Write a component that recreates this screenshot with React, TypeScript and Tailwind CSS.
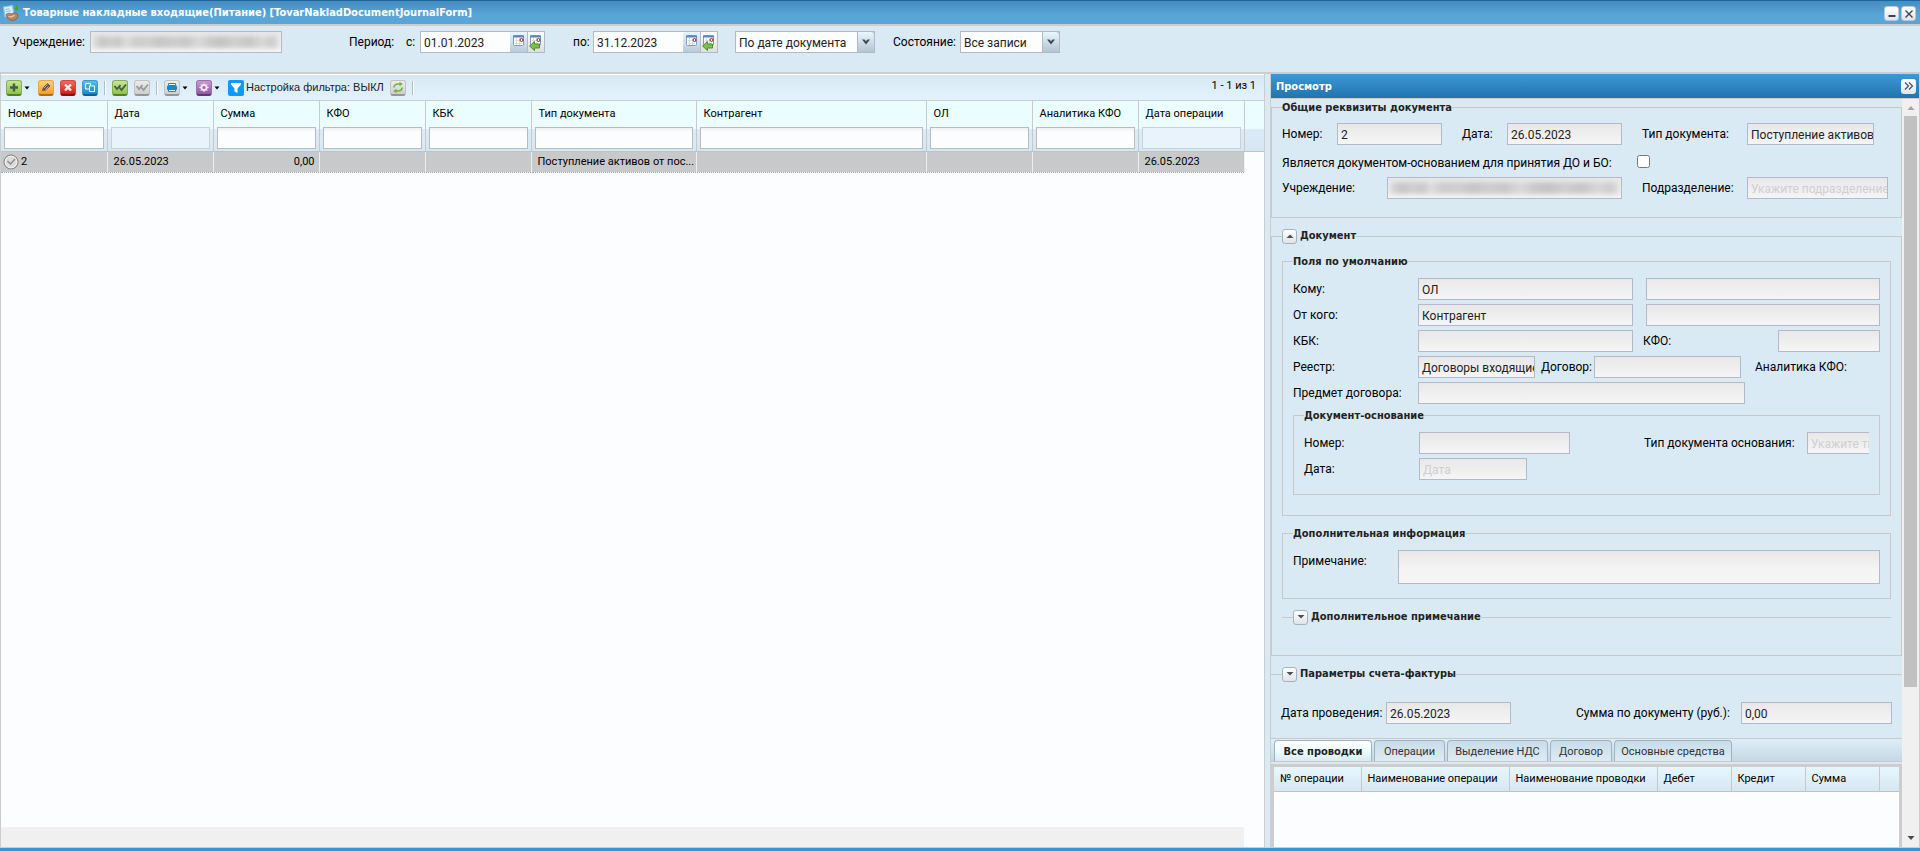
import React from 'react';
import clsx from 'clsx';

type FieldProps = {
  id: string;
  className: string;
  value?: string;
  placeholder?: string;
};

type FieldLabelProps = {
  htmlFor: string;
  className?: string;
  children: React.ReactNode;
};

type Column = {
  id: string;
  title: string;
  value: string;
  width: string;
  locked?: boolean;
  numeric?: boolean;
};

const columns: Column[] = [
  { id: 'number', title: 'Номер', value: '2', width: 'w-[106px]' },
  { id: 'date', title: 'Дата', value: '26.05.2023', width: 'w-[106px]', locked: true },
  { id: 'sum', title: 'Сумма', value: '0,00', width: 'w-[106px]', numeric: true },
  { id: 'kfo', title: 'КФО', value: '', width: 'w-[106px]' },
  { id: 'kbk', title: 'КБК', value: '', width: 'w-[106px]' },
  { id: 'type', title: 'Тип документа', value: 'Поступление активов от пос...', width: 'w-[165px]' },
  { id: 'agent', title: 'Контрагент', value: '', width: '' },
  { id: 'person', title: 'ОЛ', value: '', width: 'w-[106px]' },
  { id: 'analytics', title: 'Аналитика КФО', value: '', width: 'w-[106px]' },
  { id: 'opdate', title: 'Дата операции', value: '26.05.2023', width: 'w-[106px]', locked: true },
];

const entryColumns = [
  { title: '№ операции', width: 'w-[87px]' },
  { title: 'Наименование операции', width: 'w-[148px]' },
  { title: 'Наименование проводки', width: 'w-[148px]' },
  { title: 'Дебет', width: 'w-[74px]' },
  { title: 'Кредит', width: 'w-[74px]' },
  { title: 'Сумма', width: 'w-[74px]' },
];

const tabs = [
  { title: 'Все проводки', width: 'w-[98px]' },
  { title: 'Операции', width: 'w-[71px]' },
  { title: 'Выделение НДС', width: 'w-[101px]' },
  { title: 'Договор', width: 'w-[62px]' },
  { title: 'Основные средства', width: 'w-[118px]' },
];

function FieldLabel({ htmlFor, className, children }: FieldLabelProps) {
  return (
    <label htmlFor={htmlFor} className={clsx('shrink-0 whitespace-nowrap', className)}>
      {children}
    </label>
  );
}

function Field({ id, className, value, placeholder }: FieldProps) {
  return (
    <input
      id={id}
      type="text"
      readOnly
      value={value ?? ''}
      placeholder={placeholder}
      className={clsx(
        'h-[22px] shrink-0 border border-[#b5b8c8] bg-linear-to-b from-[#e8e8e8] to-[#f5f5f5] pt-0.5 pl-[3px] text-[#222] placeholder:text-[#cfcfd3]',
        className,
      )}
    />
  );
}

// Field whose content is hidden behind a smudge
function MaskedField({ id, className }: { id: string; className: string }) {
  return (
    <div className={clsx('relative shrink-0', className)}>
      <Field id={id} className="block w-full" />
      <span className="pointer-events-none absolute inset-x-[3px] inset-y-[5px] bg-[linear-gradient(90deg,#dcdcdc_0%,#c6c6c6_5%,#d0d0d0_10%,#c8c8c8_14%,#dedede_18%,#cccccc_23%,#d0d0d0_30%,#c6c6c6_36%,#cecece_44%,#c8c8c8_50%,#dadada_57%,#cacaca_63%,#c4c4c4_69%,#cfcfcf_76%,#c7c7c7_84%,#d8d8d8_91%,#cccccc_96%,#e0e0e0_100%)] blur-[2px]" />
    </div>
  );
}

function Calendar({ arrow }: { arrow?: boolean }) {
  return (
    <svg viewBox="0 0 16 18" className="h-[18px] w-4">
      <rect x="2.5" y="2.5" width="10" height="10" rx="1" fill="#fff" stroke="#7d9ac6" />
      <path d="M2 3.5h11" stroke="#5f83bb" strokeWidth="2" />
      <path d="M4 7.5h7M4 10.5h7M5.500 5v7M8.500 5v7" stroke="#d5dbe4" strokeWidth="1" />
      <circle cx="10.500" cy="7" r="1.500" fill="#fff" stroke="#a01818" />
      {arrow && <path d="M1.500 13l5-4.500v2.500h5v4h-5v2.500z" fill="#7cc04a" stroke="#3f8a22" strokeWidth="0.9" />}
    </svg>
  );
}

function DateField({ id, value }: { id: string; value: string }) {
  return (
    <div className="flex">
      <input
        id={id}
        type="text"
        defaultValue={value}
        className="h-[22px] w-[90px] border border-r-0 border-[#b5b8c8] bg-[#fcfdff] px-[3px] pt-0.5 text-[#222]"
      />
      <button
        aria-label="Выбрать дату"
        className="flex h-[22px] w-[17px] items-center justify-center border-y border-[#b5b8c8] bg-linear-to-b from-[#eaf5fb] to-[#b9cbd8]"
      >
        <Calendar />
      </button>
      <button
        aria-label="Сбросить дату"
        className="flex h-[22px] w-[18px] items-center justify-center border border-[#b5b8c8] bg-linear-to-b from-white to-[#dcdfe2]"
      >
        <Calendar arrow />
      </button>
    </div>
  );
}

function Combo({ id, className, value }: { id: string; className: string; value: string }) {
  return (
    <div className={clsx('relative', className)}>
      <select id={id} className="block h-[22px] w-full appearance-none border border-[#b5b8c8] bg-[#fcfdff] px-[3px] pt-0.5 text-[#222]">
        <option>{value}</option>
      </select>
      <span className="pointer-events-none absolute inset-y-0 right-0 flex w-[18px] items-center justify-center rounded-tr-sm border border-[#b5b8c8] bg-linear-to-b from-[#eaf7fd] to-[#b3c5d1]">
        <svg viewBox="0 0 10 6" className="mb-px h-1.5 w-2.5">
          <path d="M1 0.500h2.500L5 2.200L6.500 0.500H9L5 5.500z" fill="#3d4a53" />
        </svg>
      </span>
    </div>
  );
}

type ToolProps = {
  label: string;
  tone: string;
  menu?: boolean;
  children: React.ReactNode;
};

function Tool({ label, tone, menu, children }: ToolProps) {
  return (
    <button aria-label={label} className="flex items-center gap-[2px]">
      <span className={clsx('flex h-4 w-4 items-center justify-center rounded-[3px] border border-b-2 bg-linear-to-b', tone)}>
        <svg viewBox="0 0 14 13" className="h-[13px] w-3.5 shrink-0" fill="none">
          {children}
        </svg>
      </span>
      {menu && (
        <svg viewBox="0 0 6 4" className="h-1 w-1.5">
          <path d="M0.500 0.500h5L3 3.500z" fill="#000" />
        </svg>
      )}
    </button>
  );
}

function Separator() {
  return <span className="h-3.5 w-0.5 border-r border-r-white bg-[#b3bcc2]" />;
}

const doubleCheck = 'M1.500 5l2.500 3l3.500-4M6.500 6.500l2 2.500l4.500-5.500';

function Toolbar() {
  return (
    <div className="flex h-[26px] items-center border-t border-white bg-linear-to-b from-[#d8e8f2] to-[#e3f3fd] pr-2 pl-[5px]">
      <div className="flex items-center gap-2">
        <Tool label="Добавить" menu tone="border-[#8cab5a] border-b-[#5b7d26] from-[#c6e59a] to-[#8dc63f]">
          <path d="M7 2.500v8M3 6.500h8" stroke="#4b5a45" strokeWidth="2.400" />
        </Tool>
        <div className="flex items-center gap-1.5">
          <Tool label="Изменить" tone="border-[#e8a640] border-b-[#b56d0a] from-[#ffd07a] to-[#fb9d1e]">
            <path d="M3.500 9.500l1-3l4-4l2.500 2.500l-4.500 4z" fill="#555" stroke="#6a5a45" />
            <path d="M5 7l3.500-3.500M6.500 8.500l3-3" stroke="#c9c4b8" strokeWidth="0.800" />
          </Tool>
          <Tool label="Удалить" tone="border-[#d8433d] border-b-[#8e0c0a] from-[#f4665f] to-[#cf1512]">
            <path d="M4 3.500l6 6M10 3.500l-6 6" stroke="#f3eeee" strokeWidth="2.400" />
          </Tool>
          <Tool label="Копировать" tone="border-[#3b9bc8] border-b-[#0c6391] from-[#5fbce6] to-[#0f8dc7]">
            <path d="M2.500 2.500h5v5.500h-5z" stroke="#fff" />
            <path d="M6.500 5h5v5.500h-5z" fill="#2d9bd0" stroke="#fff" />
          </Tool>
        </div>
      </div>
      <div className="ml-1.5 flex items-center gap-1.5">
        <Separator />
        <Tool label="Провести" tone="border-[#8cab5a] border-b-[#5b7d26] from-[#c6e59a] to-[#8dc63f]">
          <path d={doubleCheck} stroke="#4a5a42" strokeWidth="1.800" />
        </Tool>
        <Tool label="Отменить проведение" tone="border-[#c2c2c2] border-b-[#969696] from-[#ececec] to-[#cfcfcf]">
          <path d={doubleCheck} stroke="#9a9a9a" strokeWidth="1.800" />
        </Tool>
        <Separator />
        <div className="flex items-center gap-2">
          <Tool label="Печать" menu tone="border-[#c2c2c2] border-b-[#969696] from-[#ececec] to-[#cfcfcf]">
            <path d="M3.500 2.500h7v2h-7zM3.500 8.500h7v2h-7z" fill="#fff" stroke="#1a86cc" />
            <rect x="2" y="4.500" width="10" height="4.500" rx="1" fill="#1a86cc" />
          </Tool>
          <Tool label="Действия" menu tone="border-[#9c6fa8] border-b-[#653874] from-[#c79ad2] to-[#8f5aa0]">
            <circle cx="7" cy="6.500" r="2.600" stroke="#f0e6f3" strokeWidth="2" />
            <path d="M7 1.800v9.400M2.300 6.500h9.400M3.700 3.200l6.600 6.600M10.300 3.200l-6.600 6.600" stroke="#f0e6f3" strokeWidth="1" />
            <circle cx="7" cy="6.500" r="1.500" fill="#9b68ab" />
          </Tool>
        </div>
      </div>
      <button className="ml-2 flex items-center gap-0.5 font-['Liberation_Sans',sans-serif] text-[11px] text-[#222]">
        <svg viewBox="0 0 16 16" className="h-4 w-4">
          <rect width="16" height="16" rx="2" fill="#0d99ff" />
          <path d="M3 3h10v1.500L9.500 8.500V13L6.500 11.500v-3L3 4.500z" fill="#fff" />
        </svg>
        Настройка фильтра: ВЫКЛ
      </button>
      <div className="ml-1.5 flex items-center gap-1.5">
        <Tool label="Обновить" tone="border-[#c2c2c2] border-b-[#969696] from-[#ececec] to-[#cfcfcf]">
          <path d="M3 6.500c0-2.500 2-3.500 4-3.500h2.500M11 6.500c0 2.500-2 3.500-4 3.500H4.500" stroke="#6db33f" strokeWidth="1.600" />
          <path d="M8.500 0.800l3.300 2.200l-3.300 2.200zM5.500 7.800L2.200 10l3.300 2.200z" fill="#6db33f" />
        </Tool>
        <Separator />
      </div>
      <span className="mb-1 ml-auto pt-px text-[11px]">1 - 1 из 1</span>
    </div>
  );
}

function JournalTable() {
  return (
    <table className="w-full table-fixed border-collapse text-[11px]">
      <thead>
        <tr className="bg-[linear-gradient(#ebfdff_0,#ebfdff_28px,#dbecf8_28px,#d7e7f2_100%)]">
          {columns.map(col => (
            <th
              key={col.id}
              scope="col"
              className={clsx('h-[50px] border-r border-b border-r-[#c9c9c9] border-b-[#b4c6d2] p-0 pr-[3px] pl-[3px] text-left align-top font-normal', col.width)}
            >
              <div className="flex h-[26px] items-center pl-1">{col.title}</div>
              <input
                type="text"
                aria-label={`Фильтр: ${col.title}`}
                disabled={col.locked}
                className={clsx(
                  'block h-[22px] w-full border px-1',
                  col.locked ? 'border-[#cbd0d4] bg-[#e9f3fb]' : 'border-[#b9bbbe] bg-linear-to-b from-[#eff1f3] from-0% to-[#fcfdff] to-20%',
                )}
              />
            </th>
          ))}
          <td className="w-5 border-b border-b-[#b4c6d2]" />
        </tr>
      </thead>
      <tbody>
        <tr>
          {columns.map((col, i) => (
            <td
              key={col.id}
              className={clsx(
                'h-[21px] border-r border-b border-r-[#ededed] border-b-[#a5a5a5] bg-[#c8c9cb] p-0 pt-px [border-bottom-style:dotted]',
                col.numeric ? 'pr-[4px] text-right' : i === 0 ? 'pl-[2px]' : 'pl-[6px]',
              )}
            >
              {i === 0 ? (
                <div className="flex items-center gap-0.5">
                  <svg viewBox="0 0 16 16" className="h-4 w-4">
                    <circle cx="8" cy="8" r="7" fill="#dcdcdc" stroke="#7c7c7c" />
                    <circle cx="8" cy="8" r="5.800" fill="none" stroke="#f2f2f2" />
                    <path d="M4.500 7l3 3l4.500-5" fill="none" stroke="#8a8a8a" strokeWidth="1.400" />
                  </svg>
                  {col.value}
                </div>
              ) : (
                <div className="whitespace-nowrap">{col.value}</div>
              )}
            </td>
          ))}
          <td />
        </tr>
      </tbody>
    </table>
  );
}

function CollapseToggle({ open, label }: { open?: boolean; label: string }) {
  return (
    <button
      aria-label={label}
      aria-expanded={!!open}
      className="flex h-[15px] w-[15px] items-center justify-center rounded-[3px] border border-[#a9b3bb] bg-linear-to-b from-white to-[#dfe3e8]"
    >
      <svg viewBox="0 0 8 4" className="h-1 w-2">
        <path d={open ? 'M0.500 4L4 0.500L7.500 4z' : 'M0.500 0L4 3.500L7.500 0z'} fill="#4a4f54" />
      </svg>
    </button>
  );
}

const legendClass = "font-['DejaVu_Sans_Condensed',sans-serif] text-[11px] font-bold text-[#222]";

function GeneralSection() {
  return (
    <fieldset className="min-w-0 border border-[#c8c8c8] px-2.5 pt-2 pb-[18px]">
      <legend className={clsx(legendClass, 'pt-px leading-[14px]')}>Общие реквизиты документа</legend>
      <div className="flex items-center">
        <FieldLabel htmlFor="doc-number" className="w-[55px]">Номер:</FieldLabel>
        <Field id="doc-number" className="w-[105px]" value="2" />
        <FieldLabel htmlFor="doc-date" className="ml-5 w-[45px]">Дата:</FieldLabel>
        <Field id="doc-date" className="w-[115px]" value="26.05.2023" />
        <FieldLabel htmlFor="doc-type" className="ml-5 w-[105px]">Тип документа:</FieldLabel>
        <Field id="doc-type" className="w-[127px]" value="Поступление активов от поставщика" />
      </div>
      <div className="flex h-8 items-center">
        <FieldLabel htmlFor="doc-basis" className="w-[355px] pt-1">Является документом-основанием для принятия ДО и БО:</FieldLabel>
        <input id="doc-basis" type="checkbox" className="h-[13px] w-[13px]" />
      </div>
      <div className="flex items-center">
        <FieldLabel htmlFor="doc-org" className="w-[105px]">Учреждение:</FieldLabel>
        <MaskedField id="doc-org" className="w-[235px]" />
        <FieldLabel htmlFor="doc-unit" className="ml-5 w-[105px]">Подразделение:</FieldLabel>
        <Field id="doc-unit" className="w-[141px]" placeholder="Укажите подразделение" />
      </div>
    </fieldset>
  );
}

function DocumentSection() {
  return (
    <fieldset className="mt-2.5 min-w-0 border border-[#c8c8c8] px-2.5 pt-2.5 pb-[30px]">
      <legend className={legendClass}>
        <span className="flex h-4 items-center gap-[3px]">
          <CollapseToggle open label="Свернуть" />
          Документ
        </span>
      </legend>
      <fieldset className="min-w-0 border border-[#c8c8c8] px-2.5 pt-[9px] pb-5">
        <legend className={clsx(legendClass, 'pt-px leading-[14px]')}>Поля по умолчанию</legend>
        <div className="flex flex-col gap-1">
          <div className="flex items-center">
            <FieldLabel htmlFor="to-kind" className="w-[125px]">Кому:</FieldLabel>
            <Field id="to-kind" className="w-[215px]" value="ОЛ" />
            <Field id="to-name" className="ml-[13px] w-[234px]" />
          </div>
          <div className="flex items-center">
            <FieldLabel htmlFor="from-kind" className="w-[125px]">От кого:</FieldLabel>
            <Field id="from-kind" className="w-[215px]" value="Контрагент" />
            <Field id="from-name" className="ml-[13px] w-[234px]" />
          </div>
          <div className="flex items-center">
            <FieldLabel htmlFor="kbk" className="w-[125px]">КБК:</FieldLabel>
            <Field id="kbk" className="w-[215px]" />
            <FieldLabel htmlFor="kfo" className="ml-2.5 w-[135px]">КФО:</FieldLabel>
            <Field id="kfo" className="w-[102px]" />
          </div>
          <div className="flex items-center">
            <FieldLabel htmlFor="registry" className="w-[125px]">Реестр:</FieldLabel>
            <Field id="registry" className="w-[117px]" value="Договоры входящие" />
            <FieldLabel htmlFor="contract" className="ml-1.5 w-[53px]">Договор:</FieldLabel>
            <Field id="contract" className="w-[147px]" />
            <span className="ml-3.5">Аналитика КФО:</span>
          </div>
          <div className="flex items-center">
            <FieldLabel htmlFor="subject" className="w-[125px]">Предмет договора:</FieldLabel>
            <Field id="subject" className="w-[327px]" />
          </div>
          <fieldset className="min-w-0 border border-[#c8c8c8] px-2.5 pt-[9px] pb-3.5">
            <legend className={clsx(legendClass, 'pt-px leading-[14px]')}>Документ-основание</legend>
            <div className="flex flex-col gap-1 overflow-hidden">
              <div className="flex items-center">
                <FieldLabel htmlFor="basis-number" className="w-[115px]">Номер:</FieldLabel>
                <Field id="basis-number" className="w-[151px]" />
                <FieldLabel htmlFor="basis-type" className="ml-[74px] w-[163px]">Тип документа основания:</FieldLabel>
                <Field id="basis-type" className="w-[141px]" placeholder="Укажите тип документа" />
              </div>
              <div className="flex items-center">
                <FieldLabel htmlFor="basis-date" className="w-[115px]">Дата:</FieldLabel>
                <Field id="basis-date" className="w-[108px]" placeholder="Дата" />
              </div>
            </div>
          </fieldset>
        </div>
      </fieldset>
      <fieldset className="mt-2.5 min-w-0 border border-[#c8c8c8] px-2.5 pt-[9px] pb-3.5">
        <legend className={clsx(legendClass, 'pt-px leading-[14px]')}>Дополнительная информация</legend>
        <div className="flex">
          <FieldLabel htmlFor="note" className="w-[105px] pt-[3px]">Примечание:</FieldLabel>
          <textarea
            id="note"
            readOnly
            className="block h-[34px] min-w-0 flex-1 resize-none border border-[#b5b8c8] bg-linear-to-b from-[#e8e8e8] to-[#f5f5f5] to-60% px-[3px]"
          />
        </div>
      </fieldset>
      <fieldset className="mt-2.5 min-w-0 border-t border-[#c8c8c8] px-[11px]">
        <legend className={legendClass}>
          <span className="flex h-4 items-center gap-[3px]">
            <CollapseToggle label="Развернуть" />
            Дополнительное примечание
          </span>
        </legend>
      </fieldset>
    </fieldset>
  );
}

function EntryTabs() {
  return (
    <div className="mt-3.5 flex min-h-0 flex-1 flex-col">
      <div role="tablist" className="flex h-6 shrink-0 items-end gap-0.5 border-y border-[#c8c8c8] bg-linear-to-b from-[#deeef8] to-[#c6d8e4] pl-[3px]">
        {tabs.map((tab, i) => (
          <button
            key={tab.title}
            role="tab"
            aria-selected={i === 0}
            className={clsx(
              'h-[21px] shrink-0 rounded-t border border-b-0 border-[#9fb3bf] pt-0.5 text-center text-[11px] whitespace-nowrap',
              tab.width,
              i === 0
                ? "bg-linear-to-b from-white via-[#ebfdff] to-[#daeaf5] font-['DejaVu_Sans_Condensed',sans-serif] font-bold text-[#222]"
                : 'bg-linear-to-b from-[#c9dce7] to-[#dcecf6] text-[#333]',
            )}
          >
            {tab.title}
          </button>
        ))}
      </div>
      <div className="mt-0.5 min-h-0 flex-1 border-x-3 border-t-3 border-[#cdcdcd] bg-[#fcfdff]">
        <table className="w-full table-fixed border-collapse text-[11px]">
          <thead>
            <tr className="bg-linear-to-b from-[#e6f7ff] to-[#d7e7f2]">
              {entryColumns.map(col => (
                <th
                  key={col.title}
                  scope="col"
                  className={clsx('h-6 border-r border-b border-r-[#c9c9c9] border-b-[#b4c6d2] p-0 pt-0.5 pl-1.5 text-left font-normal whitespace-nowrap', col.width)}
                >
                  {col.title}
                </th>
              ))}
              <td className="border-b border-b-[#b4c6d2]" />
            </tr>
          </thead>
        </table>
      </div>
    </div>
  );
}

function Scrollbar() {
  return (
    <div className="flex w-[17px] shrink-0 flex-col items-center bg-[#f0f0f0]">
      <svg viewBox="0 0 8 17" className="h-[17px] w-2 shrink-0">
        <path d="M0.500 11L4 7L7.500 11z" fill="#a3a3a3" />
      </svg>
      <div className="w-[13px] flex-[4] bg-[#c1c1c1]" />
      <div className="flex-[1]" />
      <svg viewBox="0 0 8 17" className="h-[17px] w-2 shrink-0">
        <path d="M0.500 6L4 10L7.500 6z" fill="#4a4a4a" />
      </svg>
    </div>
  );
}

function PreviewPanel() {
  return (
    <aside className="flex w-[650px] shrink-0 flex-col border-x border-[#cdcdcd]">
      <div className="flex h-6 shrink-0 items-center justify-between bg-linear-to-b from-[#3e98d2] to-[#1f74af] pr-[3px] pl-[5px]">
        <h2 className="pt-0.5 font-['DejaVu_Sans_Condensed',sans-serif] text-[11px] font-bold text-white">Просмотр</h2>
        <button aria-label="Свернуть панель" className="flex h-[15px] w-[15px] items-center justify-center rounded-[3px] bg-linear-to-b from-white to-[#dce6f0]">
          <svg viewBox="0 0 10 8" className="h-2 w-2.5" fill="none" stroke="#4a4f5c" strokeWidth="1.200">
            <path d="M1 0.500L4.500 4L1 7.500M5 0.500L8.500 4L5 7.500" />
          </svg>
        </button>
      </div>
      <div className="flex min-h-0 flex-1 border-t border-[#cdcdcd]">
        <div className="flex min-w-0 flex-1 flex-col overflow-hidden pt-px">
          <GeneralSection />
          <DocumentSection />
          <fieldset className="mt-2.5 min-w-0 border-t border-[#c8c8c8] px-[11px]">
            <legend className={legendClass}>
              <span className="flex h-4 items-center gap-[3px]">
                <CollapseToggle label="Развернуть" />
                Параметры счета-фактуры
              </span>
            </legend>
          </fieldset>
          <div className="mt-5 flex items-center pl-2.5">
            <FieldLabel htmlFor="posting-date" className="w-[105px]">Дата проведения:</FieldLabel>
            <Field id="posting-date" className="w-[125px]" value="26.05.2023" />
            <FieldLabel htmlFor="doc-sum" className="ml-[65px] w-[165px]">Сумма по документу (руб.):</FieldLabel>
            <Field id="doc-sum" className="w-[151px]" value="0,00" />
          </div>
          <EntryTabs />
        </div>
        <Scrollbar />
      </div>
    </aside>
  );
}

export default function App() {
  return (
    <div className="flex h-screen flex-col overflow-hidden border-b-3 border-[#3a95d0] bg-[#daeaf5] font-[Roboto,sans-serif] text-xs text-black">
      <header className="flex h-[26px] shrink-0 items-center border-t border-b-2 border-t-[#1f669d] border-b-[#cdcdcd] bg-linear-to-b from-[#468dc0] to-[#58a5d8] to-60% pr-1 pl-[3px]">
        <svg viewBox="0 0 16 16" className="h-4 w-4" fill="none">
          <path d="M0.500 2l9-1.500l1.500 10L2 12z" fill="#d6edfa" stroke="#8cc4e6" />
          <path d="M2.500 4.500l4-0.700M2.800 6.500l5-0.800" stroke="#8fc3e4" />
          <path d="M3 9.500c2-1.500 3.500-1.500 5-0.500l3.500-1c2 0 3.500 1 3.500 3c-1 3-3 4.500-5.500 4.500c-3 0-5.500-2-6.500-6z" fill="#b98562" stroke="#8a5d40" strokeWidth="0.800" />
          <path d="M5.500 11.500c2 0.800 4 0.500 6-1.200" stroke="#ecccb0" strokeWidth="1.200" />
          <path d="M13.500 0v3.500" stroke="#3fa535" strokeWidth="1.400" />
          <path d="M11.500 3h4l-2 3z" fill="#3fa535" />
        </svg>
        <h1 className="ml-1 pt-0.5 font-['DejaVu_Sans_Condensed',sans-serif] text-[11px] font-bold text-white">
          Товарные накладные входящие(Питание) [TovarNakladDocumentJournalForm]
        </h1>
        <div className="ml-auto flex gap-0.5 pt-0.5">
          <button aria-label="Свернуть окно" className="flex h-[15px] w-[15px] items-center justify-center rounded-[3px] border border-[#b9c7d2] bg-linear-to-b from-white to-[#dfe4ee]">
            <svg viewBox="0 0 10 10" className="h-2.5 w-2.5">
              <rect x="1.500" y="6" width="7" height="2" fill="#3f4452" />
            </svg>
          </button>
          <button aria-label="Закрыть окно" className="flex h-[15px] w-[15px] items-center justify-center rounded-[3px] border border-[#b9c7d2] bg-linear-to-b from-white to-[#dfe4ee]">
            <svg viewBox="0 0 10 10" className="h-2.5 w-2.5">
              <path d="M1.500 1.500l7 7M8.500 1.500l-7 7" stroke="#3f4452" strokeWidth="1.400" />
            </svg>
          </button>
        </div>
      </header>

      <div className="flex h-12 shrink-0 items-start border-b-2 border-[#cdcdcd] pt-[5px] pl-3">
        <div className="flex items-center">
          <FieldLabel htmlFor="org" className="w-[78px]">Учреждение:</FieldLabel>
          <MaskedField id="org" className="w-48" />
        </div>
        <div className="ml-[67px] flex items-center">
          <span className="w-[57px]">Период:</span>
          <FieldLabel htmlFor="period-from" className="w-3.5">с:</FieldLabel>
          <DateField id="period-from" value="01.01.2023" />
          <FieldLabel htmlFor="period-to" className="ml-7 w-5">по:</FieldLabel>
          <DateField id="period-to" value="31.12.2023" />
        </div>
        <Combo id="date-kind" className="ml-[17px] w-[140px]" value="По дате документа" />
        <div className="ml-[18px] flex items-center">
          <FieldLabel htmlFor="state" className="w-[67px]">Состояние:</FieldLabel>
          <Combo id="state" className="w-[100px]" value="Все записи" />
        </div>
      </div>

      <div className="flex min-h-0 flex-1 gap-[5px] border-b border-[#cdcdcd]">
        <main className="flex min-w-0 flex-1 flex-col border-x border-[#cdcdcd] bg-[#fcfdff]">
          <Toolbar />
          <div className="border-t border-[#cdcdcd]">
            <JournalTable />
          </div>
          <div className="mt-auto mr-5 h-5 bg-[#f0f0f0]" />
        </main>
        <PreviewPanel />
      </div>
    </div>
  );
}
